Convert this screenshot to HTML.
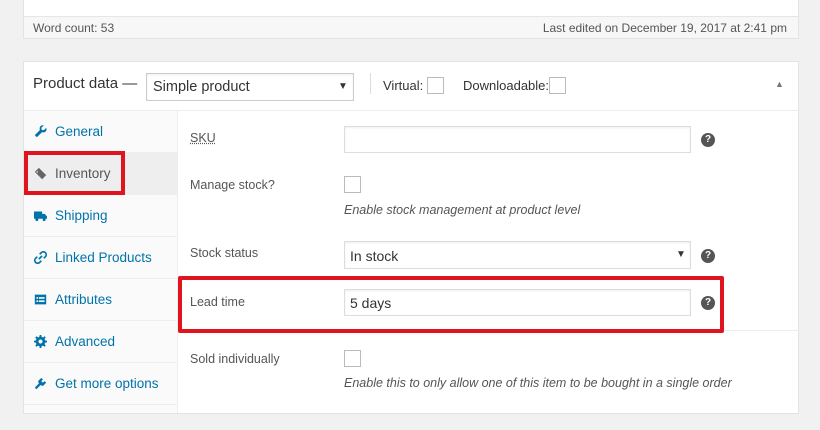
<!DOCTYPE html>
<html><head><style>
*{box-sizing:border-box;margin:0;padding:0}
body{width:820px;height:430px;background:#f1f1f1;font-family:"Liberation Sans",sans-serif;color:#444;position:relative;overflow:hidden;font-size:13px}
.a{position:absolute}
.box{background:#fff;border:1px solid #e3e3e3}
.inp{position:absolute;background:#fff;border:1px solid #ddd;box-shadow:inset 0 1px 2px rgba(0,0,0,.07)}
.cb{position:absolute;width:17px;height:17px;border:1px solid #bbb;background:#fff}
.help{position:absolute;width:14px;height:14px;border-radius:50%;background:#555;color:#fff;font-size:10px;font-weight:bold;text-align:center;line-height:14px}
.tab{position:absolute;left:0;width:154px;height:42px;border-bottom:1px solid #eee;color:#0073aa;font-size:13.5px;line-height:42px;padding-left:31px}
.tab svg{position:absolute;left:10px;top:14px;width:13px;height:13px;fill:#0073aa}
.lbl{position:absolute;left:190px;font-size:12.5px;color:#555}
.it{position:absolute;left:344px;font-style:italic;color:#555;font-size:12.5px}
</style></head><body>
<div class="a box" style="left:23px;top:-1px;width:776px;height:40px;"></div>
<div class="a" style="left:24px;top:16px;width:774px;height:22px;background:#f7f7f7;border-top:1px solid #e6e6e6"></div>
<div class="a" style="left:33px;top:21px;font-size:12px;color:#555">Word count: 53</div>
<div class="a" style="right:33px;top:21px;font-size:12px;color:#555">Last edited on December 19, 2017 at 2:41 pm</div>

<div class="a box" style="left:23px;top:61px;width:776px;height:353px;"></div>
<div class="a" style="left:24px;top:110px;width:774px;height:1px;background:#eee"></div>
<div class="a" style="left:33px;top:75px;font-size:15px;color:#333">Product data —</div>
<div class="inp" style="left:146px;top:73px;width:208px;height:28px;border-color:#ccc"></div>
<div class="a" style="left:153px;top:79px;font-size:14.5px;color:#333">Simple product</div>
<div class="a" style="left:338px;top:81px;font-size:10px;color:#333">▼</div>
<div class="a" style="left:370px;top:73px;width:1px;height:21px;background:#ddd"></div>
<div class="a" style="left:383px;top:78px;font-size:13px;color:#333">Virtual:</div>
<div class="cb" style="left:427px;top:77px"></div>
<div class="a" style="left:463px;top:78px;font-size:13px;color:#333">Downloadable:</div>
<div class="cb" style="left:549px;top:77px"></div>
<div class="a" style="left:775px;top:79px;font-size:9px;color:#777">▲</div>

<div class="a" style="left:24px;top:111px;width:154px;height:302px;background:#fafafa;border-right:1px solid #eee">
<div class="tab" style="top:0"><svg viewBox="0 0 16 16"><path d="M15 3.5l-3 3-2.5-.5-.5-2.5 3-3C10 0 7.5 1 7 3.5c-.2 1 0 2 .3 2.6L1 12.5 3.5 15l6.4-6.3c.7.3 1.6.5 2.6.3C15 8.5 16 6 15 3.5z"/></svg>General</div>
<div class="tab" style="top:42px;background:#eee;color:#555"><svg viewBox="0 0 16 16" style="fill:#666"><path d="M1 6l5-5 9 9-5 5z M4 5a1 1 0 1 0 .01 0z"/></svg>Inventory</div>
<div class="tab" style="top:84px"><svg viewBox="0 0 16 16"><path d="M0 3h10v9H0z M10 6h3l3 3v3h-6z"/><circle cx="3.5" cy="13" r="1.8"/><circle cx="12.5" cy="13" r="1.8"/></svg>Shipping</div>
<div class="tab" style="top:126px"><svg viewBox="0 0 16 16"><path d="M6 10l4-4M7 4l2-2a3 3 0 0 1 5 5l-2 2M9 12l-2 2a3 3 0 0 1-5-5l2-2" stroke="#0073aa" stroke-width="2" fill="none"/></svg>Linked Products</div>
<div class="tab" style="top:168px"><svg viewBox="0 0 16 16"><path d="M1 2h14v12H1z M3 5v2h2V5z M6 5v2h7V5z M3 9v2h2V9z M6 9v2h7V9z" fill-rule="evenodd"/></svg>Attributes</div>
<div class="tab" style="top:210px"><svg viewBox="0 0 16 16"><path d="M7 0h2l.4 2.3 1.6.7 2-1.4 1.4 1.4-1.4 2 .7 1.6L16 7v2l-2.3.4-.7 1.6 1.4 2-1.4 1.4-2-1.4-1.6.7L9 16H7l-.4-2.3-1.6-.7-2 1.4-1.4-1.4 1.4-2-.7-1.6L0 9V7l2.3-.4.7-1.6-1.4-2 1.4-1.4 2 1.4 1.6-.7z M8 5.5a2.5 2.5 0 1 0 .01 0z" fill-rule="evenodd"/></svg>Advanced</div>
<div class="tab" style="top:252px"><svg viewBox="0 0 16 16"><path d="M9 1l2 2-2 2 2 2 2-2 2 2-4 4-3-1-5 5-2-2 5-5-1-3z"/></svg>Get more options</div>
</div>

<div class="lbl" style="top:131px;text-decoration:underline dotted">SKU</div>
<div class="inp" style="left:344px;top:126px;width:347px;height:27px"></div>
<div class="help" style="left:701px;top:133px">?</div>
<div class="lbl" style="top:178px">Manage stock?</div>
<div class="cb" style="left:344px;top:176px"></div>
<div class="it" style="top:203px">Enable stock management at product level</div>
<div class="lbl" style="top:246px">Stock status</div>
<div class="inp" style="left:344px;top:241px;width:347px;height:28px"></div>
<div class="a" style="left:350px;top:248px;font-size:14px;color:#333">In stock</div>
<div class="a" style="left:676px;top:249px;font-size:10px;color:#333">▼</div>
<div class="help" style="left:701px;top:249px">?</div>
<div class="a" style="left:178px;top:330px;width:620px;height:1px;background:#eee"></div>
<div class="lbl" style="top:295px">Lead time</div>
<div class="inp" style="left:344px;top:289px;width:347px;height:27px"></div>
<div class="a" style="left:350px;top:295px;font-size:14px;color:#333">5 days</div>
<div class="help" style="left:701px;top:296px">?</div>
<div class="lbl" style="top:352px">Sold individually</div>
<div class="cb" style="left:344px;top:350px"></div>
<div class="it" style="top:376px">Enable this to only allow one of this item to be bought in a single order</div>

<div class="a" style="left:24px;top:151px;width:101px;height:44px;border:4px solid #e0141e"></div>
<div class="a" style="left:178px;top:276px;width:546px;height:57px;border:4px solid #e0141e;border-radius:2px"></div>
</body></html>
